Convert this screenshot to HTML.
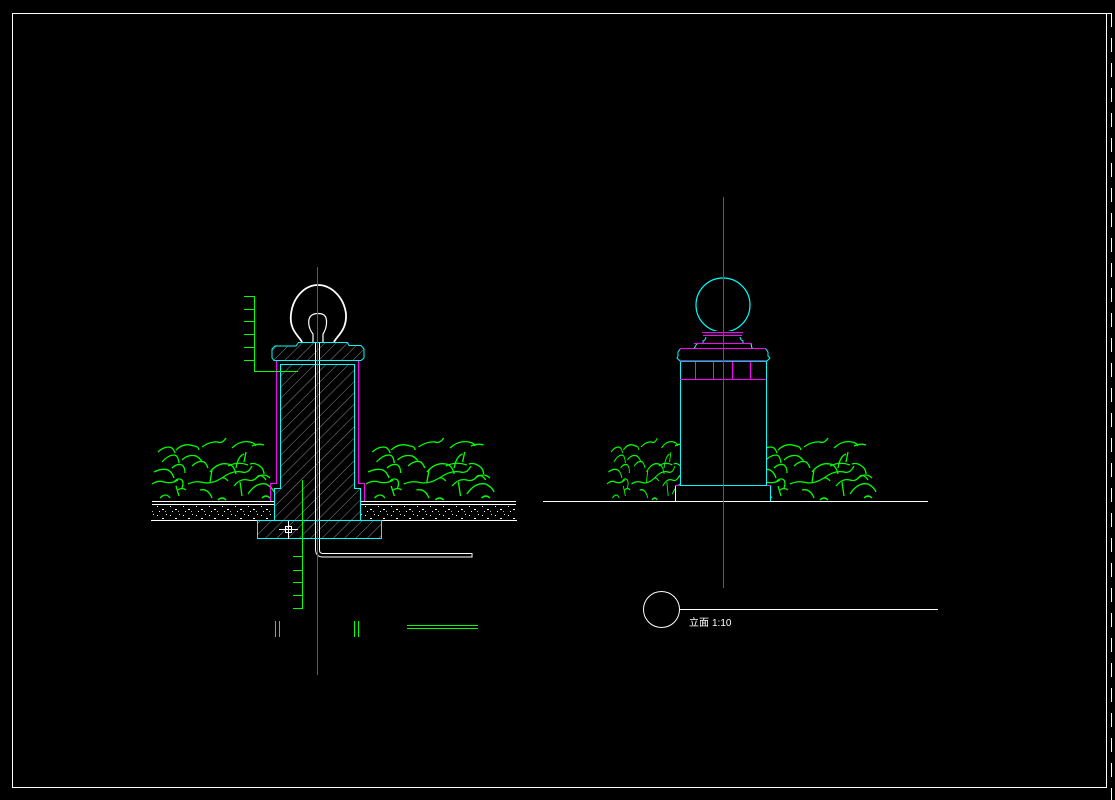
<!DOCTYPE html>
<html><head><meta charset="utf-8"><style>
html,body{margin:0;padding:0;background:#000;width:1115px;height:800px;overflow:hidden}
svg{display:block}
</style></head><body>
<svg width="1115" height="800" viewBox="0 0 1115 800" xmlns="http://www.w3.org/2000/svg" shape-rendering="crispEdges">
<defs>
<pattern id="hat" width="8" height="8" patternUnits="userSpaceOnUse" patternTransform="rotate(45)">
<line x1="0" y1="0" x2="0" y2="8" stroke="#888" stroke-width="1"/>
</pattern>
<pattern id="grav" width="13" height="9" patternUnits="userSpaceOnUse">
<rect x="1" y="2" width="1" height="1" fill="#fff"/><rect x="6" y="5" width="2" height="1" fill="#fff"/><rect x="10" y="1" width="1" height="1" fill="#ddd"/><rect x="3" y="7" width="1" height="1" fill="#fff"/><rect x="9" y="7" width="1" height="1" fill="#bbb"/>
</pattern>
<g id="shrub" fill="none" stroke="#0f0" stroke-width="1.3" shape-rendering="auto">
<path d="M6 10 q5 -5 11 -5 q4 0 6 6"/>
<path d="M10 20 q6 -7 12 -7 q4 0 5 8"/>
<path d="M24 8 q8 -8 18 -4 q4 0 5 4"/>
<path d="M50 5 q8 -6 16 -5 q4 2 8 -4"/>
<path d="M80 6 q8 -8 18 -6 q5 1 6 4"/>
<path d="M100 4 q6 -3 12 -1"/>
<path d="M92 12 q-6 2 -8 14"/>
<path d="M30 18 q6 -6 14 -4 q4 2 6 6"/>
<path d="M2 30 q8 -4 14 -2 q4 2 6 8"/>
<path d="M20 26 q5 -5 10 -3 q3 2 3 8"/>
<path d="M40 24 q6 -6 12 -4 q2 1 4 6"/>
<path d="M58 30 q8 -10 18 -8 q6 1 8 10"/>
<path d="M76 24 q10 -5 20 -1"/>
<path d="M98 22 q6 -2 12 4 q2 3 2 6"/>
<path d="M70 36 q10 -8 20 -6 q6 2 10 -6"/>
<path d="M104 36 q8 -6 14 0"/>
<path d="M0 42 q6 -4 12 -2 q8 2 14 -2"/>
<path d="M22 40 q4 -5 8 -2 q2 3 0 8"/>
<path d="M36 42 q8 -4 18 -1 q8 0 14 -4 q4 -3 8 2"/>
<path d="M82 44 q6 -8 14 -6 q6 2 10 -4 q4 -2 8 4"/>
<path d="M48 48 q8 -2 12 8"/>
<path d="M96 52 q8 -12 18 -10 q6 3 8 8"/>
<path d="M26 48 q4 -3 8 0 M24 44 l3 10 M88 40 l2 14 M60 28 l-2 12 M94 10 l-2 10"/>
<path d="M8 56 q6 -6 10 0 M66 58 q4 -4 8 0 M110 56 q4 -4 8 0"/>
</g>
</defs>

<!-- frame -->
<rect x="12.5" y="13.5" width="1094" height="774" fill="none" stroke="#fff" stroke-width="1"/>
<line x1="1111.5" y1="13" x2="1111.5" y2="800" stroke="#fff" stroke-width="1" stroke-dasharray="14,11"/>
<line x1="1107" y1="13.5" x2="1112" y2="13.5" stroke="#fff"/>

<!-- ===== LEFT SECTION ===== -->
<use href="#shrub" transform="translate(152,442) scale(1.0,1)"/>
<use href="#shrub" transform="translate(366,442) scale(1.05,1)"/>

<line x1="152" y1="501.5" x2="275" y2="501.5" stroke="#fff"/>
<line x1="152" y1="504.5" x2="275" y2="504.5" stroke="#fff"/>
<line x1="361" y1="501.5" x2="516" y2="501.5" stroke="#fff"/>
<line x1="361" y1="504.5" x2="516" y2="504.5" stroke="#fff"/>
<rect x="152" y="506" width="123" height="14" fill="url(#grav)"/>
<rect x="361" y="506" width="155" height="14" fill="url(#grav)"/>
<line x1="151" y1="520.5" x2="517" y2="520.5" stroke="#fff"/>

<rect x="257.5" y="520.5" width="124" height="18" fill="url(#hat)" stroke="#0ff"/>

<path d="M280.5 364.5 H354.5 V488.5 H360.5 V520.5 H274.5 V488.5 H280.5 Z" fill="url(#hat)" stroke="#0ff"/>
<path d="M276.5 360 V483.5 H270.5 V501" fill="none" stroke="#f0f" stroke-width="1"/>
<path d="M358.5 360 V483.5 H364.5 V501" fill="none" stroke="#f0f" stroke-width="1"/>
<path d="M298.5 342.5 H347.5 L349 345.5 H361 L364 349 V358 L361 360.5 H274 L272 358 V349 L275 346 H296 Z" fill="url(#hat)" stroke="#0ff" shape-rendering="auto"/>
<g shape-rendering="auto">
<path d="M302 342 C299 336 289 330 291 314 C293 297 305 285 318 285 C331 285 344 297 346 314 C347 330 337 336 334 342" fill="none" stroke="#fff" stroke-width="1.8"/>
<path d="M313 342 V334 C308 328 307 318 312 315 C315 313 321 313 324 315 C328 318 327 328 323 334 V342" fill="none" stroke="#fff" stroke-width="1.2"/>
<path d="M315.5 342 V550 Q316 557 323 557 H472 V553.5 H323 Q319.5 553.5 319.5 550 V342" fill="none" stroke="#fff" stroke-width="1"/>
</g>

<g stroke="#0f0" fill="none">
<path d="M244 296.5 H254.5 V371.5 H298 M244 309.5 H254 M244 321.5 H254 M244 334.5 H254 M244 347.5 H254 M244 360.5 H254"/>
<path d="M302.5 480 V608.5 H293 M293 556.5 H302 M293 570.5 H302 M293 582.5 H302 M293 595.5 H302"/>
<path d="M275.5 621 V637 M279.5 621 V637 M354.5 621 V637 M358.5 621 V637"/>
<path d="M407 625.5 H478 M407 628.5 H478"/>
</g>
<g stroke="#fff" fill="none"><rect x="285.5" y="526.5" width="6" height="6"/><path d="M279 529.5 H298 M288.5 521 V539"/></g>
<line x1="317.5" y1="267" x2="317.5" y2="675" stroke="#b33" stroke-width="1"/>

<!-- ===== RIGHT ELEVATION ===== -->
<use href="#shrub" transform="translate(607,442) scale(0.68,1)"/>
<use href="#shrub" transform="translate(754,442) scale(1.0,1)"/>
<line x1="543" y1="501.5" x2="928" y2="501.5" stroke="#fff"/>
<path d="M675.5 501 V485.5 H770.5 V501" fill="#000" stroke="#f0f"/>
<line x1="675.5" y1="486" x2="675.5" y2="501" stroke="#fff"/>
<line x1="770.5" y1="486" x2="770.5" y2="501" stroke="#0ff"/>
<rect x="680.5" y="361.5" width="86" height="124" fill="#000" stroke="#0ff"/>
<g stroke="#f0f" fill="none">
<path d="M680 361.5 H766 M680 379.5 H766 M695.5 362 V379 M713.5 362 V379 M732.5 362 V379 M750.5 362 V379"/>
</g>
<path d="M680.5 348.5 H765.5 L768 352 V356 L770 358 L767 361 H680 L677 358 L678 356 V352 Z" fill="#000" stroke="#0ff" shape-rendering="auto"/>
<line x1="680" y1="348.5" x2="766" y2="348.5" stroke="#f0f"/>
<path d="M694 348.5 L697 343.5 H751 L752 348.5" fill="none" stroke="#0ff"/>
<line x1="694" y1="343.5" x2="752" y2="343.5" stroke="#f0f"/>
<path d="M706 336 Q706 340 703 341 V343 M740 336 Q740 340 743 341 V343" fill="none" stroke="#0ff" shape-rendering="auto"/>
<circle cx="723" cy="305" r="27" fill="none" stroke="#0ff" stroke-width="1.2" shape-rendering="auto"/>
<rect x="700" y="331" width="46" height="6" fill="#000"/>
<path d="M702 332.5 H743 M703 335.5 H742" stroke="#f0f"/>
<line x1="723.5" y1="197" x2="723.5" y2="588" stroke="#b33"/>

<circle cx="661.5" cy="609.5" r="18" fill="none" stroke="#fff" shape-rendering="auto"/>
<line x1="680" y1="609.5" x2="938" y2="609.5" stroke="#fff"/>
<text x="689" y="626" fill="#fff" font-family="'Liberation Sans','Noto Sans CJK SC',sans-serif" font-size="10">立面</text>
<text x="712" y="626" fill="#fff" font-family="'Liberation Sans',sans-serif" font-size="10">1:10</text>
</svg>
</body></html>
